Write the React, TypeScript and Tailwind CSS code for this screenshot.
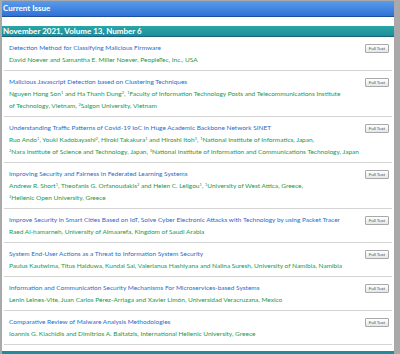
const articles = [
  {
    title: "Detection Method for Classifying Malicious Firmware",
    authors: [<>David Noever and Samantha E. Miller Noever, PeopleTec, Inc., USA</>],
  },
  {
    title: "Malicious Javascript Detection based on Clustering Techniques",
    authors: [
      <>
        Nguyen Hong Son<sup>1</sup> and Ha Thanh Dung<sup>2</sup>, <sup>1</sup>Faculty of Information Technology Posts and Telecommunications Institute
      </>,
      <>
        of Technology, Vietnam, <sup>2</sup>Saigon University, Vietnam
      </>,
    ],
  },
  {
    title: "Understanding Traffic Patterns of Covid-19 IoC in Huge Academic Backbone Network SINET",
    authors: [
      <>
        Ruo Ando<sup>1</sup>, Youki Kadobayashi<sup>2</sup>, Hiroki Takakura<sup>1</sup> and Hiroshi Itoh<sup>3</sup>, <sup>1</sup>National Institute of Informatics, Japan,
      </>,
      <>
        <sup>2</sup>Nara Institute of Science and Technology, Japan, <sup>3</sup>National Institute of Information and Communications Technology, Japan
      </>,
    ],
  },
  {
    title: "Improving Security and Fairness in Federated Learning Systems",
    authors: [
      <>
        Andrew R. Short<sup>1</sup>, Theofanis G. Orfanoudakis<sup>2</sup> and Helen C. Leligou<sup>1</sup>, <sup>1</sup>University of West Attica, Greece,
      </>,
      <>
        <sup>2</sup>Hellenic Open University, Greece
      </>,
    ],
  },
  {
    title: "Improve Security in Smart Cities Based on IoT, Solve Cyber Electronic Attacks with Technology by using Packet Tracer",
    authors: [<>Raed Al-hamarneh, University of Almaarefa, Kingdom of Saudi Arabia</>],
  },
  {
    title: "System End-User Actions as a Threat to Information System Security",
    authors: [<>Paulus Kautwima, Titus Haiduwa, Kundai Sai, Valerianus Hashiyana and Nalina Suresh, University of Namibia, Namibia</>],
  },
  {
    title: "Information and Communication Security Mechanisms For Microservices-based Systems",
    authors: [<>Lenin Leines-Vite, Juan Carlos Pérez-Arriaga and Xavier Limón, Universidad Veracruzana, Mexico</>],
  },
  {
    title: "Comparative Review of Malware Analysis Methodologies",
    authors: [<>Ioannis G. Kiachidis and Dimitrios A. Baltatzis, International Hellenic University, Greece</>],
  },
];

function FullText() {
  return (
    <button className="mt-[2px] h-[9px] w-[24px] shrink-0 rounded-[1px] border border-[#a8a8a8] bg-gradient-to-b from-white to-[#e6e6e6] text-[4.5px] leading-[7px] text-[#555]">
      Full Text
    </button>
  );
}

export default function App() {
  return (
    <div
      className="h-[354px] w-[400px] overflow-hidden bg-[#a9a9a9] pl-[2px] pr-[6px] pt-[1px]"
      style={{ fontFamily: "Lato, 'Open Sans', sans-serif" }}
    >
      <div className="h-full bg-white">
        <div className="h-[16px] border-b border-[#1d4f9c] bg-gradient-to-b from-[#5a9bea] to-[#2f72d6] pl-[1px] text-[8px] font-bold leading-[15px] text-white">
          Current Issue
        </div>
        <div className="h-[9px]" />
        <div className="h-[11px] border-b border-[#16607a] bg-gradient-to-b from-[#2aa6a6] to-[#1f8c9c] pl-[1px] text-[8px] font-bold leading-[10px] text-white">
          November 2021, Volume 13, Number 6
        </div>
        <div className="px-[2px]">
          {articles.map((a) => (
            <div key={a.title} className="flex items-start justify-between border-b border-[#d4d4d4] pb-[4px] pl-[5px] pr-[3px] pt-[5px]">
              <div className="text-[6.5px] leading-[12px]">
                <div className="text-[#2b6cc4]">{a.title}</div>
                {a.authors.map((line, i) => (
                  <div key={i} className="text-[#22994a] [&_sup]:text-[4px]">
                    {line}
                  </div>
                ))}
              </div>
              <FullText />
            </div>
          ))}
        </div>
        <div className="mt-[6px] h-[3px] bg-[#1f8c9c]" />
      </div>
    </div>
  );
}
